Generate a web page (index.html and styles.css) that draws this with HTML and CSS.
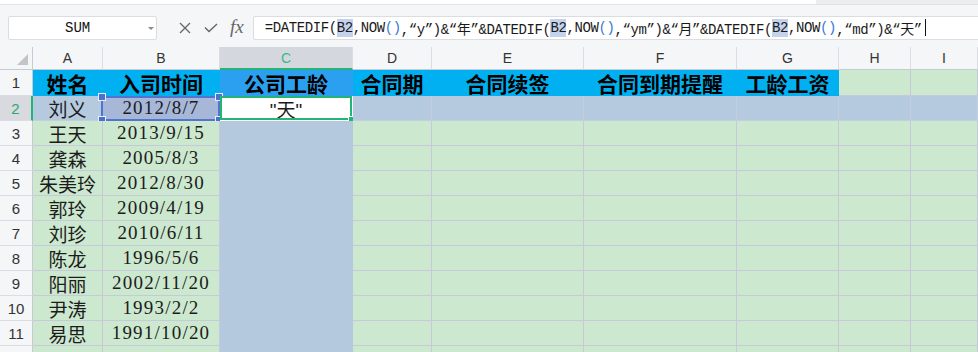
FILE: index.html
```html
<!DOCTYPE html>
<html lang="zh">
<head>
    <meta charset="UTF-8">
    <title>工龄计算</title>
    <link rel="stylesheet" href="styles.css">
</head>
<body>
    <div class="topbar"></div>
    <div class="formula-bar">
        <div class="name-box">
            <span class="name">SUM</span>
            <span class="drop"></span>
        </div>
        <svg class="icon icon-x" width="12" height="12" viewBox="0 0 12 12">
            <path d="M1 1L11 11M11 1L1 11" stroke="#666" stroke-width="1.3" fill="none"/>
        </svg>
        <svg class="icon icon-ok" width="14" height="10" viewBox="0 0 14 10">
            <path d="M1 4.5L5 8.5L13 1" stroke="#666" stroke-width="1.4" fill="none"/>
        </svg>
        <span class="fx">fx</span>
        <div class="formula-input">=DATEDIF(<span class="ref">B2</span>,NOW<span class="paren">()</span>,“y”)&amp;“年”&amp;DATEDIF(<span class="ref">B2</span>,NOW<span class="paren">()</span>,“ym”)&amp;“月”&amp;DATEDIF(<span class="ref">B2</span>,NOW<span class="paren">()</span>,“md”)&amp;“天”<span class="cursor"></span></div>
    </div>

    <div class="sheet">
        <div class="corner"><span class="tri"></span></div>
        <div class="col-head">A</div>
        <div class="col-head">B</div>
        <div class="col-head active">C</div>
        <div class="col-head">D</div>
        <div class="col-head">E</div>
        <div class="col-head">F</div>
        <div class="col-head">G</div>
        <div class="col-head">H</div>
        <div class="col-head">I</div>

        <div class="row-head">1</div>
        <div class="cell title">姓名</div>
        <div class="cell title">入司时间</div>
        <div class="cell title title-sel">公司工龄</div>
        <div class="cell title">合同期</div>
        <div class="cell title">合同续签</div>
        <div class="cell title">合同到期提醒</div>
        <div class="cell title">工龄工资</div>
        <div class="cell"></div>
        <div class="cell"></div>

        <div class="row-head active">2</div>
        <div class="cell sel-row">刘义</div>
        <div class="cell num ref-cell">2012/8/7
            <span class="ref-box"><i class="h tl"></i><i class="h tr"></i><i class="h bl"></i><i class="h br"></i></span>
        </div>
        <div class="cell edit">"天"<span class="edit-box"><i class="fill"></i></span></div>
        <div class="cell sel-row"></div>
        <div class="cell sel-row"></div>
        <div class="cell sel-row"></div>
        <div class="cell sel-row"></div>
        <div class="cell sel-row"></div>
        <div class="cell sel-row"></div>

        <div class="row-head">3</div>
        <div class="cell">王天</div>
        <div class="cell num">2013/9/15</div>
        <div class="cell sel-col"></div>
        <div class="cell"></div><div class="cell"></div><div class="cell"></div><div class="cell"></div><div class="cell"></div><div class="cell"></div>

        <div class="row-head">4</div>
        <div class="cell">龚森</div>
        <div class="cell num">2005/8/3</div>
        <div class="cell sel-col"></div>
        <div class="cell"></div><div class="cell"></div><div class="cell"></div><div class="cell"></div><div class="cell"></div><div class="cell"></div>

        <div class="row-head">5</div>
        <div class="cell">朱美玲</div>
        <div class="cell num">2012/8/30</div>
        <div class="cell sel-col"></div>
        <div class="cell"></div><div class="cell"></div><div class="cell"></div><div class="cell"></div><div class="cell"></div><div class="cell"></div>

        <div class="row-head">6</div>
        <div class="cell">郭玲</div>
        <div class="cell num">2009/4/19</div>
        <div class="cell sel-col"></div>
        <div class="cell"></div><div class="cell"></div><div class="cell"></div><div class="cell"></div><div class="cell"></div><div class="cell"></div>

        <div class="row-head">7</div>
        <div class="cell">刘珍</div>
        <div class="cell num">2010/6/11</div>
        <div class="cell sel-col"></div>
        <div class="cell"></div><div class="cell"></div><div class="cell"></div><div class="cell"></div><div class="cell"></div><div class="cell"></div>

        <div class="row-head">8</div>
        <div class="cell">陈龙</div>
        <div class="cell num">1996/5/6</div>
        <div class="cell sel-col"></div>
        <div class="cell"></div><div class="cell"></div><div class="cell"></div><div class="cell"></div><div class="cell"></div><div class="cell"></div>

        <div class="row-head">9</div>
        <div class="cell">阳丽</div>
        <div class="cell num">2002/11/20</div>
        <div class="cell sel-col"></div>
        <div class="cell"></div><div class="cell"></div><div class="cell"></div><div class="cell"></div><div class="cell"></div><div class="cell"></div>

        <div class="row-head">10</div>
        <div class="cell">尹涛</div>
        <div class="cell num">1993/2/2</div>
        <div class="cell sel-col"></div>
        <div class="cell"></div><div class="cell"></div><div class="cell"></div><div class="cell"></div><div class="cell"></div><div class="cell"></div>

        <div class="row-head">11</div>
        <div class="cell">易思</div>
        <div class="cell num">1991/10/20</div>
        <div class="cell sel-col"></div>
        <div class="cell"></div><div class="cell"></div><div class="cell"></div><div class="cell"></div><div class="cell"></div><div class="cell"></div>

        <div class="row-head">12</div>
        <div class="cell"></div>
        <div class="cell"></div>
        <div class="cell sel-col"></div>
        <div class="cell"></div><div class="cell"></div><div class="cell"></div><div class="cell"></div><div class="cell"></div><div class="cell"></div>
    </div>
</body>
</html>
```

FILE: styles.css
```css
body {
    margin: 0;
    width: 978px;
    height: 352px;
    overflow: hidden;
    background-color: #f5f6f8;
    font-family: "Liberation Sans", "Noto Sans CJK SC", sans-serif;
    color: #222;
}
.topbar {
    height: 4px;
    background: linear-gradient(to right, #fff 816px, #ededed 816px);
    border-bottom: 1px solid #e4e4e6;
}
.formula-bar {
    height: 42px;
    box-sizing: border-box;
    padding: 3px 0 0 8px;
    display: flex;
    align-items: center;
}
.name-box {
    width: 149px;
    height: 24px;
    box-sizing: border-box;
    background-color: #fff;
    border: 1px solid #dcdde0;
    border-radius: 2px;
    display: flex;
    align-items: center;
    position: relative;
}
.name {
    font-family: "Liberation Mono", monospace;
    font-size: 14px;
    margin-left: 56px;
    color: #111;
}
.drop {
    position: absolute;
    right: 2px;
    top: 10px;
    border-left: 3px solid transparent;
    border-right: 3px solid transparent;
    border-top: 3px solid #8a8a8a;
}
.icon {
    display: block;
}
.icon-x {
    margin-left: 22px;
}
.icon-ok {
    margin-left: 13px;
}
.fx {
    margin-left: 12px;
    font-family: "Liberation Serif", serif;
    font-style: italic;
    font-size: 19px;
    color: #666;
    line-height: 1;
    margin-top: -3px;
}
.formula-input {
    flex: 1;
    margin-left: 9px;
    margin-right: -4px;
    height: 24px;
    box-sizing: border-box;
    background-color: #fff;
    border: 1px solid #dcdde0;
    border-radius: 2px;
    padding-left: 11px;
    display: flex;
    align-items: center;
    white-space: nowrap;
    font-family: "Liberation Mono", "Noto Sans CJK SC", monospace;
    font-size: 14px;
    letter-spacing: -0.4px;
    color: #1a1a1a;
}
.formula-input .ref {
    background-color: #c5d2ec;
    line-height: 18px;
}
.formula-input .paren {
    color: #3a78d6;
}
.cursor {
    display: inline-block;
    width: 1px;
    height: 17px;
    background-color: #111;
    margin-left: 3px;
}

.sheet {
    display: grid;
    grid-template-columns: 33px 70px 117px 133px 79px 152px 153px 102px 72px 1fr;
    grid-template-rows: 23px 26px repeat(11, 25px);
}
.corner {
    background-color: #f5f6f8;
    border-right: 1px solid #c7c9d6;
    border-bottom: 1px solid #c7c9d6;
    position: relative;
}
.tri {
    position: absolute;
    right: 4px;
    bottom: 4px;
    border-left: 11px solid transparent;
    border-bottom: 11px solid #c4c4c6;
}
.col-head {
    background-color: #f5f6f8;
    border-right: 1px solid #dcdde4;
    border-bottom: 1px solid #c7c9d6;
    display: flex;
    align-items: center;
    justify-content: center;
    font-size: 14px;
    color: #333;
}
.col-head.active {
    background-color: #d5d7de;
    color: #3bb886;
    border-bottom: 2px solid #22b573;
}
.row-head {
    background-color: #f5f6f8;
    border-right: 1px solid #c7c9d6;
    border-bottom: 1px solid #dcdde4;
    display: flex;
    align-items: center;
    justify-content: center;
    font-size: 15px;
    color: #333;
}
.row-head.active {
    background-color: #d8dae0;
    color: #2ea86f;
    border-right: 2px solid #22b573;
}
.cell {
    background-color: #cce8cf;
    border-right: 1px solid #c6c8dc;
    border-bottom: 1px solid #c6c8dc;
    display: flex;
    align-items: center;
    justify-content: center;
    font-family: "Liberation Serif", "Noto Sans CJK SC", serif;
    font-size: 19px;
    color: #1c1c1c;
    white-space: nowrap;
    position: relative;
}
.cell.num {
    letter-spacing: 1.2px;
}
.cell.title {
    background-color: #00b0f0;
    border-color: #00b0f0;
    font-family: "Noto Sans CJK SC", sans-serif;
    font-weight: bold;
    font-size: 21px;
    color: #000;
}
.cell.title-sel {
    background-color: #2ba0f0;
    border-color: #2ba0f0;
}
.cell.sel-row {
    background-color: #b6cadf;
    border-color: #c3cee1;
}
.cell.sel-col {
    background-color: #b4c8de;
    border-color: #b4c8de;
}
.cell.ref-cell {
    background-color: #a6b7d8;
    border-color: #c3cee1;
}
.cell.edit {
    background-color: #fff;
    border-color: #fff;
    font-family: "Liberation Sans", "Noto Sans CJK SC", sans-serif;
}
.ref-box {
    position: absolute;
    left: -2px;
    top: 0;
    right: -1px;
    bottom: -1px;
    border: 2px solid #5175cf;
}
.ref-box .h {
    position: absolute;
    width: 6px;
    height: 6px;
    background-color: #4a70d0;
    border: 1px solid #e8eefa;
}
.h.tl { left: -5px; top: -5px; }
.h.tr { right: -5px; top: -5px; }
.h.bl { left: -5px; bottom: -5px; }
.h.br { right: -5px; bottom: -5px; }
.edit-box {
    position: absolute;
    left: 0;
    top: 0;
    right: 0;
    bottom: 0;
    border: 2px solid #22b573;
}
.edit-box .fill {
    position: absolute;
    right: -4px;
    bottom: -4px;
    width: 4px;
    height: 4px;
    background-color: #22b573;
    border: 1px solid #fff;
}
```
